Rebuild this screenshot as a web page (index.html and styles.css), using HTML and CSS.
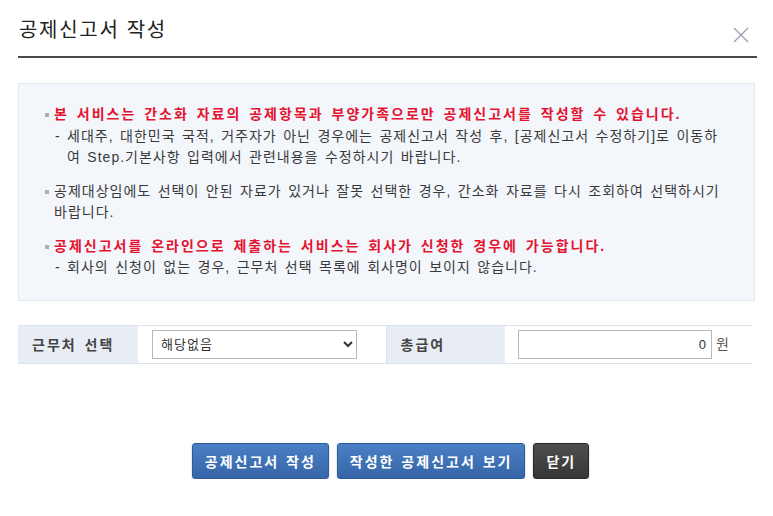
FILE: index.html
```html
<!DOCTYPE html>
<html lang="ko">
<head>
    <meta charset="UTF-8">
    <meta name="viewport" content="width=device-width, initial-scale=1.0">
    <title>공제신고서 작성</title>
    <link rel="stylesheet" href="styles.css">
</head>
<body>
    <div class="modal">
        <div class="modal-header">
            <h1>공제신고서 작성</h1>
            <button type="button" class="close-btn" aria-label="닫기">
                <svg width="16" height="16" viewBox="0 0 16 16">
                    <path d="M1 1 L15 15 M15 1 L1 15" stroke="#9ba1b1" stroke-width="1.4" fill="none"/>
                </svg>
            </button>
        </div>

        <div class="notice-box">
            <ul class="notice-list">
                <li>
                    <p class="strong">본 서비스는 간소화 자료의 공제항목과 부양가족으로만 공제신고서를 작성할 수 있습니다.</p>
                    <p class="sub">세대주, 대한민국 국적, 거주자가 아닌 경우에는 공제신고서 작성 후, [공제신고서 수정하기]로 이동하여 Step.기본사항 입력에서 관련내용을 수정하시기 바랍니다.</p>
                </li>
                <li>
                    <p>공제대상임에도 선택이 안된 자료가 있거나 잘못 선택한 경우, 간소화 자료를 다시 조회하여 선택하시기 바랍니다.</p>
                </li>
                <li>
                    <p class="strong">공제신고서를 온라인으로 제출하는 서비스는 회사가 신청한 경우에 가능합니다.</p>
                    <p class="sub">회사의 신청이 없는 경우, 근무처 선택 목록에 회사명이 보이지 않습니다.</p>
                </li>
            </ul>
        </div>

        <table class="form-table">
            <colgroup>
                <col class="col-label">
                <col class="col-value">
                <col class="col-label2">
                <col class="col-value">
            </colgroup>
            <tr>
                <th>근무처 선택</th>
                <td>
                    <select class="work-select">
                        <option>해당없음</option>
                    </select>
                </td>
                <th class="bordered">총급여</th>
                <td class="amount-cell">
                    <input type="text" class="amount-input" value="0"> <span class="unit">원</span>
                </td>
            </tr>
        </table>

        <div class="btn-area">
            <button type="button" class="btn btn-blue">공제신고서 작성</button>
            <button type="button" class="btn btn-blue">작성한 공제신고서 보기</button>
            <button type="button" class="btn btn-dark">닫기</button>
        </div>
    </div>
</body>
</html>
```

FILE: styles.css
```css
body {
    margin: 0;
    background-color: #ffffff;
    font-family: "Liberation Sans", "Noto Sans CJK KR", sans-serif;
    color: #333333;
}

.modal {
    width: 739px;
    margin-left: 18px;
}

/* header */
.modal-header {
    display: flex;
    justify-content: space-between;
    align-items: center;
    height: 56px;
    border-bottom: 2px solid #4a4a4a;
}

.modal-header h1 {
    margin: 0;
    padding-left: 1px;
    font-size: 20px;
    font-weight: normal;
    letter-spacing: 1.7px;
    color: #222222;
}

.close-btn {
    border: none;
    background: none;
    padding: 0;
    margin: 13px 8px 0 0;
    width: 16px;
    height: 16px;
    cursor: pointer;
}

.close-btn svg {
    display: block;
}

/* notice */
.notice-box {
    width: 735px;
    margin-top: 25px;
    background-color: #f3f6fb;
    border: 1px solid #e3e7ee;
    padding: 20px 0 21px;
}

.notice-list {
    list-style: none;
    margin: 0;
    padding: 0 24px 0 35px;
}

.notice-list li {
    position: relative;
    margin-bottom: 12px;
}

.notice-list li:last-child {
    margin-bottom: 0;
}

.notice-list li::before {
    content: "";
    position: absolute;
    left: -9px;
    top: 9px;
    width: 4px;
    height: 4px;
    background-color: #a9aeb7;
}

.notice-list p {
    margin: 0;
    font-size: 14px;
    line-height: 21.5px;
    letter-spacing: 1px;
    word-spacing: 1.6px;
    color: #3a3a3a;
}

.notice-list p.strong {
    color: #e4132f;
    font-weight: bold;
    letter-spacing: 2px;
    word-spacing: 2px;
}

.notice-list p.sub {
    position: relative;
    padding-left: 13px;
}

.notice-list p.sub::before {
    content: "-";
    position: absolute;
    left: 1px;
    top: 0;
}

/* form table */
.form-table {
    width: 735px;
    margin-top: 24px;
    table-layout: fixed;
    border-collapse: collapse;
    border-top: 1px solid #dde3ec;
    border-bottom: 1px solid #dde3ec;
}

.col-label {
    width: 120px;
}

.col-label2 {
    width: 119px;
}

.col-value {
    width: 248px;
}

.form-table th {
    height: 37px;
    padding: 0 0 0 14px;
    text-align: left;
    font-size: 14px;
    font-weight: bold;
    letter-spacing: 2px;
    word-spacing: 2px;
    color: #444444;
    background-color: #e8edf5;
}

.form-table th.bordered {
    border-left: 1px solid #dde3ec;
}

.form-table td {
    padding: 0 0 0 14px;
    font-size: 14px;
}

.form-table td.amount-cell {
    padding-left: 13px;
}

.work-select {
    width: 205px;
    height: 29px;
    border: 1px solid #b8b8b8;
    background-color: #ffffff;
    font-family: "Liberation Sans", "Noto Sans CJK KR", sans-serif;
    font-size: 13px;
    letter-spacing: 1px;
    color: #333333;
    padding: 0 4px;
}

.amount-input {
    width: 194px;
    height: 29px;
    box-sizing: border-box;
    border: 1px solid #b8b8b8;
    padding: 0 5px;
    text-align: right;
    font-family: "Liberation Sans", "Noto Sans CJK KR", sans-serif;
    font-size: 13px;
    color: #333333;
}

.unit {
    color: #555555;
}

/* buttons */
.btn-area {
    display: flex;
    justify-content: center;
    gap: 8px;
    margin-top: 79px;
    padding-left: 6px;
}

.btn {
    height: 36px;
    padding: 0 12px;
    border-radius: 3px;
    font-family: "Liberation Sans", "Noto Sans CJK KR", sans-serif;
    font-size: 14px;
    font-weight: bold;
    letter-spacing: 2px;
    word-spacing: 1px;
    color: #ffffff;
    cursor: pointer;
    box-shadow: 0 1px 2px rgba(0, 0, 0, 0.3);
}

.btn-blue {
    background: linear-gradient(#4a80c4, #3565a8);
    border: 1px solid #2f5c99;
}

.btn-dark {
    background: linear-gradient(#4e4e4e, #363636);
    border: 1px solid #2a2a2a;
}

.btn:hover {
    opacity: 0.9;
}
```
